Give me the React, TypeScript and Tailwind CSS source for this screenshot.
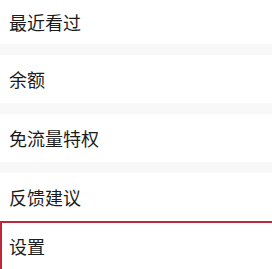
const items = ['最近看过', '余额', '免流量特权', '反馈建议'];

export default function App() {
  return (
    <div
      className="w-[272px] h-[269px] overflow-hidden bg-[#f8f8f8] flex flex-col"
      style={{ fontFamily: '"Noto Sans CJK SC", "Noto Sans", sans-serif' }}
    >
      {items.map((label, i) => (
        <div
          key={label}
          className={`bg-white flex items-center pl-[9px] text-[18px] text-[#1c1c1c] shrink-0 ${
            i === 0 ? 'h-[44px] mb-[11px]' : i === 3 ? 'h-[48px]' : 'h-[48px] mb-[11px]'
          }`}
        >
          {label}
        </div>
      ))}
      <div className="bg-white flex items-center pl-[7px] h-[48px] shrink-0 text-[18px] text-[#1c1c1c] border-t-2 border-l-2 border-[#c0283a]">
        设置
      </div>
    </div>
  );
}
